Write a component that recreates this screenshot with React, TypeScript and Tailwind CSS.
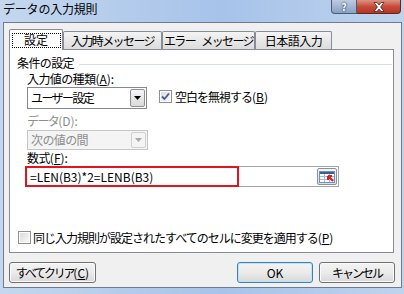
import { ReactNode } from "react"

const font = "font-['Noto_Sans_CJK_JP','Noto_Sans',sans-serif]"

const DropArrow = ({ disabled }: { disabled?: boolean }) => (
  <svg width="7" height="4" viewBox="0 0 7 4">
    <path d="M0 0 H7 L3.5 4 Z" fill={disabled ? "#a8a8a8" : "#000"} />
  </svg>
)

const Select = ({ text, width, height, disabled, track }: { text: string; width: string; height: string; disabled?: boolean; track: string }) => (
  <div className={`${width} ${height} flex items-center border ${disabled ? "border-[#c6c6c6] bg-[#f4f4f4] text-[#8d8d8d]" : "border-[#828790] bg-white text-black"}`}>
    <span className={`pl-[3px] ${track}`}>{text}</span>
    <div className={`ml-auto mr-px h-[calc(100%-2px)] w-[15px] flex items-center justify-center border rounded-[2px] ${disabled ? "border-[#d0d0d0] bg-[#f4f4f4]" : "border-[#8f8f8f] bg-gradient-to-b from-[#f6f6f6] to-[#dadada]"}`}>
      <DropArrow disabled={disabled} />
    </div>
  </div>
)

const CheckBox = ({ checked }: { checked?: boolean }) => (
  <div className="w-[13px] h-[13px] shrink-0 border border-[#8f8f8f] bg-white p-px">
    <div className="w-full h-full bg-gradient-to-br from-[#dcdcdc] to-[#f9f9f9] flex items-center justify-center">
      {checked && (
        <svg width="9" height="9" viewBox="0 0 9 9">
          <path d="M1 4.5 L3.5 7 L8 1.5" fill="none" stroke="#3f5ba2" strokeWidth="1.8" />
        </svg>
      )}
    </div>
  </div>
)

const Button = ({ children, width, primary }: { children: ReactNode; width: string; primary?: boolean }) => (
  <button className={`${width} h-[21px] rounded-[3px] border text-[12px] leading-[12px] flex items-center justify-center whitespace-nowrap bg-gradient-to-b from-[#f3f3f3] via-[#ebebeb] to-[#d8d8d8] ${primary ? "border-[#3c7fb1] shadow-[inset_0_0_0_1px_#bfe4f7]" : "border-[#707070] shadow-[inset_0_0_0_1px_#fbfbfb]"}`}>
    {children}
  </button>
)

const RefIcon = () => (
  <svg width="16" height="12" viewBox="0 0 16 12">
    <rect x="0.5" y="0.5" width="15" height="11" fill="#fff" stroke="#6e8fbf" />
    <rect x="1" y="1" width="14" height="2" fill="#3a5f98" />
    <path d="M1 5.5 H15 M1 8.5 H15 M5.5 3 V11 M10.5 3 V11" stroke="#9fb8dc" />
    <path d="M9 5 L14 10 M9 5 V9 M9 5 H13" stroke="#e21b1b" strokeWidth="2" />
  </svg>
)

// accelerator key, underlined
const Key = ({ k }: { k: string }) => (
  <span>(<span className="underline">{k}</span>)</span>
)

const TitleBar = () => (
  <div className="h-[22px] flex items-start">
    <span className="ml-[3px] mt-[2px] text-[12px] leading-[14px] text-black tracking-[-0.2px]">データの入力規則</span>
    <div className="ml-auto mr-[3px] flex h-[14px]">
      <div className="w-[26px] h-full rounded-bl-[4px] border border-t-0 border-[#4d5b70] bg-gradient-to-b from-[#bccbe0] to-[#8aa1c4] flex items-center justify-center">
        <span className="text-white text-[10px] font-bold leading-[10px] drop-shadow-[0_0_1px_#223]">?</span>
      </div>
      <div className="w-[44px] h-full rounded-br-[4px] border border-t-0 border-l-0 border-[#5a2a26] bg-gradient-to-b from-[#dc9384] via-[#c84b3a] to-[#b8331f] flex items-center justify-center">
        <svg width="14" height="10" viewBox="0 0 14 10">
          <path d="M2 0.5 H5 L7 3 L9 0.5 H12 L8.6 5 L12 9.5 H9 L7 7 L5 9.5 H2 L5.4 5 Z" fill="#fff" stroke="#3b2320" strokeWidth="0.8" />
        </svg>
      </div>
    </div>
  </div>
)

const Tab = ({ label, width, track }: { label: string; width: string; track: string }) => (
  <div className={`${width} h-[18px] border border-b-0 border-[#898c95] rounded-t-[2px] bg-gradient-to-b from-[#f4f4f4] to-[#dcdcdc] flex items-center justify-center text-[12px] leading-[12px] whitespace-pre [word-spacing:5px] ${track}`}>
    {label}
  </div>
)

export default function App() {
  return (
    <div className={`w-[404px] h-[294px] flex flex-col bg-[linear-gradient(to_right,#c4d7ee,#a7c3ea_55%,#bed3ee)] text-black ${font}`}>
      <TitleBar />
      <div className="ml-[3px] w-[399px] h-[266px] border border-[#6f7c8f] bg-[#f0f0f0] flex flex-col pt-[6px] pl-[5px]">
        <div className="flex items-end h-[20px]">
          <div className="w-[54px] h-[21px] -mb-px relative z-10 bg-white border border-b-0 border-[#898c95] rounded-t-[2px] flex items-center justify-center">
            <div className="w-[49px] h-[15px] border border-dotted border-black flex items-center justify-center text-[12px] leading-[12px]">
              設定
            </div>
          </div>
          <Tab label="入力時メッセージ" width="w-[99px]" track="tracking-[-1.6px]" />
          <Tab label="エラー メッセージ" width="w-[93px]" track="tracking-[-1.6px]" />
          <Tab label="日本語入力" width="w-[77px]" track="tracking-[-0.5px]" />
        </div>

        <div className="w-[385px] h-[204px] border border-[#898c95] bg-white flex flex-col text-[12px] leading-[12px]">
          <div className="mt-[7px] h-[12px] flex items-center pl-[7px] pr-px">
            <span className="tracking-[-0.6px]">条件の設定</span>
            <div className="flex-1 h-px bg-[#d5dfe5] ml-[5px] mt-[2px]" />
          </div>

          <div className="mt-[4px] h-[12px] pl-[17px]">
            <span className="tracking-[-0.6px]">入力値の種類</span><Key k="A" />:
          </div>

          <div className="mt-[2px] flex items-start pl-[17px]">
            <Select text="ユーザー設定" width="w-[120px]" height="h-[22px]" track="tracking-[-1.6px]" />
            <div className="ml-[12px] mt-[3px] flex items-center gap-[3px]">
              <CheckBox checked />
              <span><span className="tracking-[-1px]">空白を無視する</span><Key k="B" /></span>
            </div>
          </div>

          <div className="mt-[6px] h-[12px] pl-[17px] text-[#8d8d8d]">
            <span className="tracking-[-1.6px]">データ</span>(D):
          </div>

          <div className="mt-[3px] pl-[17px]">
            <Select text="次の値の間" width="w-[121px]" height="h-[20px]" disabled track="tracking-[-0.6px]" />
          </div>

          <div className="mt-[2px] h-[12px] pl-[17px]">
            <span className="tracking-[-0.6px]">数式</span><Key k="F" />:
          </div>

          <div className="mt-[2px] pl-[15px]">
            <div className="relative w-[314px] h-[21px] border border-[#a0a5ad] bg-white flex items-center">
              <span className="pl-[4px] text-[12px]">=LEN(B3)*2=LENB(B3)</span>
              <div className="ml-auto mr-px w-[20px] h-[17px] rounded-[2px] border border-[#8a8f98] bg-gradient-to-b from-[#f5f5f5] to-[#dedede] flex items-center justify-center">
                <RefIcon />
              </div>
              <div className="absolute -left-px -top-px w-[214px] h-[21px] border-2 border-[#e5131d]" />
            </div>
          </div>

          <div className="mt-auto mb-[8px] pl-[8px] flex items-center gap-[2px]">
            <CheckBox />
            <span><span className="tracking-[-1px]">同じ入力規則が設定されたすべてのセルに変更を適用する</span><Key k="P" /></span>
          </div>
        </div>

        <div className="mt-[9px] w-[386px] flex">
          <Button width="w-[87px]">
            <span className="tracking-[-2.2px]">すべてクリア</span><Key k="C" />
          </Button>
          <div className="ml-auto flex gap-[6px]">
            <Button width="w-[76px]" primary>OK</Button>
            <Button width="w-[76px]"><span className="tracking-[-2px]">キャンセル</span></Button>
          </div>
        </div>
      </div>
    </div>
  )
}
